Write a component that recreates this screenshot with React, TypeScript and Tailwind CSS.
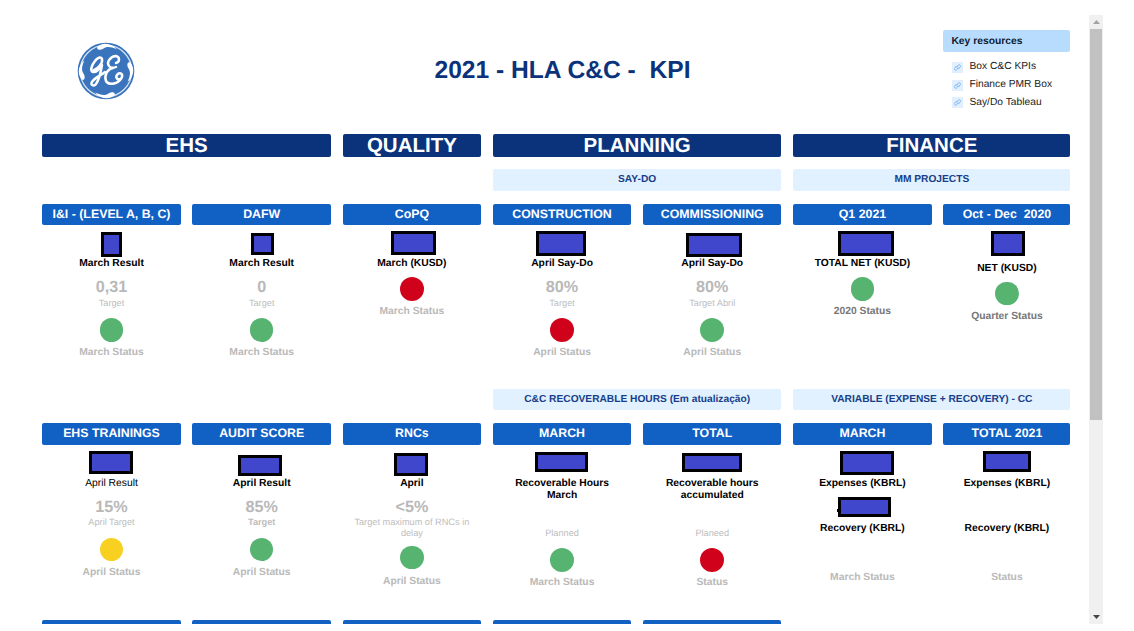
import React from "react";

type Item =
  | { kind: "label" | "value" | "target" | "status"; text: string; className?: string }
  | { kind: "dot"; className: string };

interface Metric {
  title: string;
  masks: string[];
  items: Item[];
  stray?: boolean;
}

const GREEN = "bg-[#56b370]";
const RED = "bg-[#d0021b]";
const YELLOW = "bg-[#f8d022]";

const firstRow: Metric[] = [
  {
    title: "I&I - (LEVEL A, B, C)",
    masks: ["left-[59px] top-[7px] w-[21px] h-[25px]"],
    items: [
      { kind: "label", text: "March Result" },
      { kind: "value", text: "0,31" },
      { kind: "target", text: "Target" },
      { kind: "dot", className: `mt-[10px] ${GREEN}` },
      { kind: "status", text: "March Status" },
    ],
  },
  {
    title: "DAFW",
    masks: ["left-[59px] top-[8px] w-[23px] h-[22px]"],
    items: [
      { kind: "label", text: "March Result" },
      { kind: "value", text: "0" },
      { kind: "target", text: "Target" },
      { kind: "dot", className: `mt-[10px] ${GREEN}` },
      { kind: "status", text: "March Status" },
    ],
  },
  {
    title: "CoPQ",
    masks: ["left-[48px] top-[6px] w-[45px] h-[24px]"],
    items: [
      { kind: "label", text: "March (KUSD)" },
      { kind: "dot", className: `mt-[7px] ${RED}` },
      { kind: "status", text: "March Status" },
    ],
  },
  {
    title: "CONSTRUCTION",
    masks: ["left-[43px] top-[6px] w-[50px] h-[25px]"],
    items: [
      { kind: "label", text: "April Say-Do" },
      { kind: "value", text: "80%" },
      { kind: "target", text: "Target" },
      { kind: "dot", className: `mt-[10px] ${RED}` },
      { kind: "status", text: "April Status" },
    ],
  },
  {
    title: "COMMISSIONING",
    masks: ["left-[43px] top-[8px] w-[56px] h-[24px]"],
    items: [
      { kind: "label", text: "April Say-Do" },
      { kind: "value", text: "80%" },
      { kind: "target", text: "Target Abril" },
      { kind: "dot", className: `mt-[10px] ${GREEN}` },
      { kind: "status", text: "April Status" },
    ],
  },
  {
    title: "Q1 2021",
    masks: ["left-[45px] top-[6px] w-[56px] h-[25px]"],
    items: [
      { kind: "label", text: "TOTAL NET (KUSD)" },
      { kind: "dot", className: `mt-[7px] ${GREEN}` },
      { kind: "status", text: "2020 Status", className: "text-[#777777]" },
    ],
  },
  {
    title: "Oct - Dec  2020",
    masks: ["left-[48px] top-[6px] w-[34px] h-[25px]"],
    items: [
      { kind: "label", text: "NET (KUSD)", className: "mt-[4.5px]" },
      { kind: "dot", className: `mt-[7px] ${GREEN}` },
      { kind: "status", text: "Quarter Status", className: "text-[#777777]" },
    ],
  },
];

const secondRow: Metric[] = [
  {
    title: "EHS TRAININGS",
    masks: ["left-[47px] top-[6px] w-[44px] h-[23px]"],
    items: [
      { kind: "label", text: "April Result", className: "font-normal" },
      { kind: "value", text: "15%" },
      { kind: "target", text: "April Target" },
      { kind: "dot", className: `mt-[10px] ${YELLOW}` },
      { kind: "status", text: "April Status" },
    ],
  },
  {
    title: "AUDIT SCORE",
    masks: ["left-[46px] top-[10px] w-[44px] h-[21px]"],
    items: [
      { kind: "label", text: "April Result" },
      { kind: "value", text: "85%" },
      { kind: "target", text: "Target", className: "font-bold" },
      { kind: "dot", className: `mt-[10px] ${GREEN}` },
      { kind: "status", text: "April Status" },
    ],
  },
  {
    title: "RNCs",
    masks: ["left-[51px] top-[8px] w-[34px] h-[23px]"],
    items: [
      { kind: "label", text: "April" },
      { kind: "value", text: "<5%" },
      { kind: "target", text: "Target maximum of RNCs in\ndelay" },
      { kind: "dot", className: `mt-[7.5px] ${GREEN}` },
      { kind: "status", text: "April Status", className: "mt-[6.5px]" },
    ],
  },
  {
    title: "MARCH",
    masks: ["left-[42px] top-[7px] w-[53px] h-[20px]"],
    items: [
      { kind: "label", text: "Recoverable Hours\nMarch" },
      { kind: "target", text: "Planned", className: "mt-[26.5px]" },
      { kind: "dot", className: `mt-[9.5px] ${GREEN}` },
      { kind: "status", text: "March Status" },
    ],
  },
  {
    title: "TOTAL",
    masks: ["left-[39px] top-[8px] w-[60px] h-[19px]"],
    items: [
      { kind: "label", text: "Recoverable hours\naccumulated" },
      { kind: "target", text: "Planeed", className: "mt-[26.5px]" },
      { kind: "dot", className: `mt-[9.5px] ${RED}` },
      { kind: "status", text: "Status" },
    ],
  },
  {
    title: "MARCH",
    masks: [
      "left-[47px] top-[6px] w-[54px] h-[24px]",
      "left-[45px] top-[52px] w-[53px] h-[20px]",
    ],
    stray: true,
    items: [
      { kind: "label", text: "Expenses (KBRL)" },
      { kind: "label", text: "Recovery (KBRL)", className: "mt-[33.5px]" },
      { kind: "status", text: "March Status", className: "mt-[37px]" },
    ],
  },
  {
    title: "TOTAL 2021",
    masks: ["left-[40px] top-[6px] w-[48px] h-[21px]"],
    items: [
      { kind: "label", text: "Expenses (KBRL)" },
      { kind: "label", text: "Recovery (KBRL)", className: "mt-[33.5px]" },
      { kind: "status", text: "Status", className: "mt-[37px]" },
    ],
  },
];

const GRID =
  "grid grid-cols-[repeat(6,138.4px)_127px] gap-x-[11.8px] shrink-0";

function MetricItem({ item }: { item: Item }) {
  if (item.kind === "dot") {
    return <div className={`size-[23.5px] shrink-0 rounded-full ${item.className}`} />;
  }
  const extra = item.className ?? "";
  switch (item.kind) {
    case "label":
      return (
        <div className={`text-[10.3px] leading-[12px] text-black ${extra.includes("font-") ? "" : "font-bold"} ${extra}`}>
          {item.text}
        </div>
      );
    case "value":
      return (
        <div className={`mt-[8px] text-[16.2px] leading-[18px] font-bold text-[#b9b9b9] ${extra}`}>
          {item.text}
        </div>
      );
    case "target":
      return (
        <div className={`text-[9.2px] leading-[10.5px] text-[#bdbdbd] ${extra.includes("mt-") ? "" : "mt-[1.5px]"} ${extra}`}>
          {item.text}
        </div>
      );
    default:
      return (
        <div
          className={`text-[10.3px] leading-[12px] font-bold ${extra.includes("text-") ? "" : "text-[#b9b9b9]"} ${extra.includes("mt-") ? "" : "mt-[5.5px]"} ${extra}`}
        >
          {item.text}
        </div>
      );
  }
}

function MetricColumn({ metric }: { metric: Metric }) {
  return (
    <section className="flex flex-col">
      <h3 className="h-[21.5px] rounded-[2px] bg-[#1160c4] text-center text-[12.35px] leading-[21px] font-bold text-white">
        {metric.title}
      </h3>
      <div className="relative flex flex-col items-center pt-[33px] text-center">
        {metric.stray && (
          <span className="absolute top-[64px] left-[44px] h-[3px] w-[2px] bg-black" />
        )}
        {metric.masks.map((mask) => (
          <span key={mask} className={`absolute border-3 border-black bg-[#4047cc] ${mask}`} />
        ))}
        {metric.items.map((item, i) => (
          <MetricItem key={i} item={item} />
        ))}
      </div>
    </section>
  );
}

function MainHeading({ text, span = "" }: { text: string; span?: string }) {
  return (
    <h2 className={`h-[23px] rounded-[2px] bg-[#0b337b] text-center text-[20.5px] leading-[23px] font-bold text-white ${span}`}>
      {text}
    </h2>
  );
}

function SubHeading({ text, className }: { text: string; className: string }) {
  return (
    <div className={`h-[21.5px] rounded-[2px] bg-[#e2f1ff] text-center text-[10.2px] leading-[22.5px] font-bold text-[#173e88] ${className}`}>
      {text}
    </div>
  );
}

function Logo() {
  const swirl = "M-17 -19 C-14 -26 -5 -28 2 -24 C-5 -24.500 -9 -23 -11 -19.500 C-13 -17 -17 -16 -17 -19 Z";
  return (
    <svg className="size-[58px]" viewBox="-29 -29 58 58" aria-label="GE">
      <circle r="28.3" fill="#3a74bd" />
      <circle r="25.8" fill="none" stroke="#d7e4f3" strokeWidth="1.3" />
      <g fill="#fff">
        <path d={swirl} transform="rotate(22)" />
        <path d={swirl} transform="rotate(112)" />
        <path d={swirl} transform="rotate(202)" />
        <path d={swirl} transform="rotate(292)" />
      </g>
      <g fill="none" stroke="#fff" strokeWidth="2.5" strokeLinecap="round" strokeLinejoin="round">
        <path d="M-12 -1 C-8 -2 -3 -8 -4 -12 C-5 -15 -9 -13 -11 -10 C-15 -5 -16 0 -13 1 C-9 2 -6 -3 -4 -6 C-5 0 -7 9 -10 13 C-12 16 -16 14 -14 11 C-12 7 -6 5 -1 1" />
        <path d="M10 -8 C14 -9 14 -14 10 -15 C5 -15 0 -9 3 -5 C4 -3 8 -3 10 -4 M7 -3 C1 -2 -2 5 0 10 C3 15 13 13 16 6 C17 2 13 1 11 4 C9 7 12 9 14 8" />
      </g>
    </svg>
  );
}

function ResourceLink({ text }: { text: string }) {
  return (
    <li className="flex h-[17.8px] items-center gap-[6px]">
      <span className="flex h-[11px] w-[11.5px] items-center justify-center bg-[#e2efff]">
        <svg className="size-[7px]" viewBox="0 0 24 24" fill="none" stroke="#6ba6ee" strokeWidth="2.6" strokeLinecap="round">
          <g transform="rotate(10 12 12)">
            <path d="M10 14a5 5 0 0 0 7 0l3.500-3.500a4.500 4.500 0 0 0-7-7L12 5" />
            <path d="M14 10a5 5 0 0 0-7 0l-3.500 3.500a4.500 4.500 0 0 0 7 7L12 19" />
          </g>
        </svg>
      </span>
      <span className="text-[10.25px] leading-[12px] text-[#222]">{text}</span>
    </li>
  );
}

function Scrollbar() {
  return (
    <div className="mt-[15px] flex h-[609px] w-[14px] shrink-0 flex-col bg-[#f0f0f0]">
      <div className="flex h-[14px] items-center justify-center">
        <svg className="h-[4px] w-[7px]" viewBox="0 0 7 4"><path d="M0 4L3.500 0L7 4Z" fill="#a3a3a3" /></svg>
      </div>
      <div className="mr-px ml-px h-[391px] bg-[#c1c1c1]" />
      <div className="flex-1" />
      <div className="flex h-[15px] items-center justify-center">
        <svg className="h-[4px] w-[7px]" viewBox="0 0 7 4"><path d="M0 0L3.500 4L7 0Z" fill="#444" /></svg>
      </div>
    </div>
  );
}

export default function App() {
  return (
    <div className="flex h-[631px] w-[1134px] overflow-hidden bg-white font-['Liberation_Sans',Arial,sans-serif] whitespace-pre [text-rendering:geometricPrecision]">
      <main className="flex h-[624px] w-[1089px] shrink-0 flex-col overflow-hidden pl-[42.3px]">
        <header className={`${GRID} h-[134px]`}>
          <div className="pt-[41.5px] pl-[34.5px]">
            <Logo />
          </div>
          <h1 className="col-span-5 pt-[56px] pr-[12px] pl-[150px] text-left text-[24.6px] leading-[30px] font-bold text-[#0b337b]">
            <span className="block w-[440px] text-center">2021 - HLA C&amp;C -  KPI</span>
          </h1>
          <aside className="pt-[30px]">
            <h4 className="h-[21.5px] rounded-[2px] bg-[#b8dcfd] pl-[8px] text-[10.3px] leading-[23px] font-bold text-[#0c1c33]">
              Key resources
            </h4>
            <ul className="mt-[7px] pl-[8.5px]">
              <ResourceLink text="Box C&C KPIs" />
              <ResourceLink text="Finance PMR Box" />
              <ResourceLink text="Say/Do Tableau" />
            </ul>
          </aside>
        </header>

        <div className={GRID}>
          <MainHeading text="EHS" span="col-span-2" />
          <MainHeading text="QUALITY" />
          <MainHeading text="PLANNING" span="col-span-2" />
          <MainHeading text="FINANCE" span="col-span-2" />
        </div>

        <div className={`${GRID} mt-[12px]`}>
          <SubHeading text="SAY-DO" className="col-span-2 col-start-4" />
          <SubHeading text="MM PROJECTS" className="col-span-2 col-start-6" />
        </div>
        <div className={`${GRID} mt-[13px] h-[185px]`}>
          {firstRow.map((m, i) => (
            <MetricColumn key={i} metric={m} />
          ))}
        </div>

        <div className={GRID}>
          <SubHeading text="C&C RECOVERABLE HOURS (Em atualização)" className="col-span-2 col-start-4" />
          <SubHeading text="VARIABLE (EXPENSE + RECOVERY) - CC" className="col-span-2 col-start-6" />
        </div>
        <div className={`${GRID} mt-[13px] h-[197px]`}>
          {secondRow.map((m, i) => (
            <MetricColumn key={i} metric={m} />
          ))}
        </div>

        <div className={GRID}>
          {[0, 1, 2, 3, 4].map((i) => (
            <div key={i} className="h-[21.5px] rounded-[2px] bg-[#1160c4]" />
          ))}
        </div>
      </main>
      <Scrollbar />
    </div>
  );
}
